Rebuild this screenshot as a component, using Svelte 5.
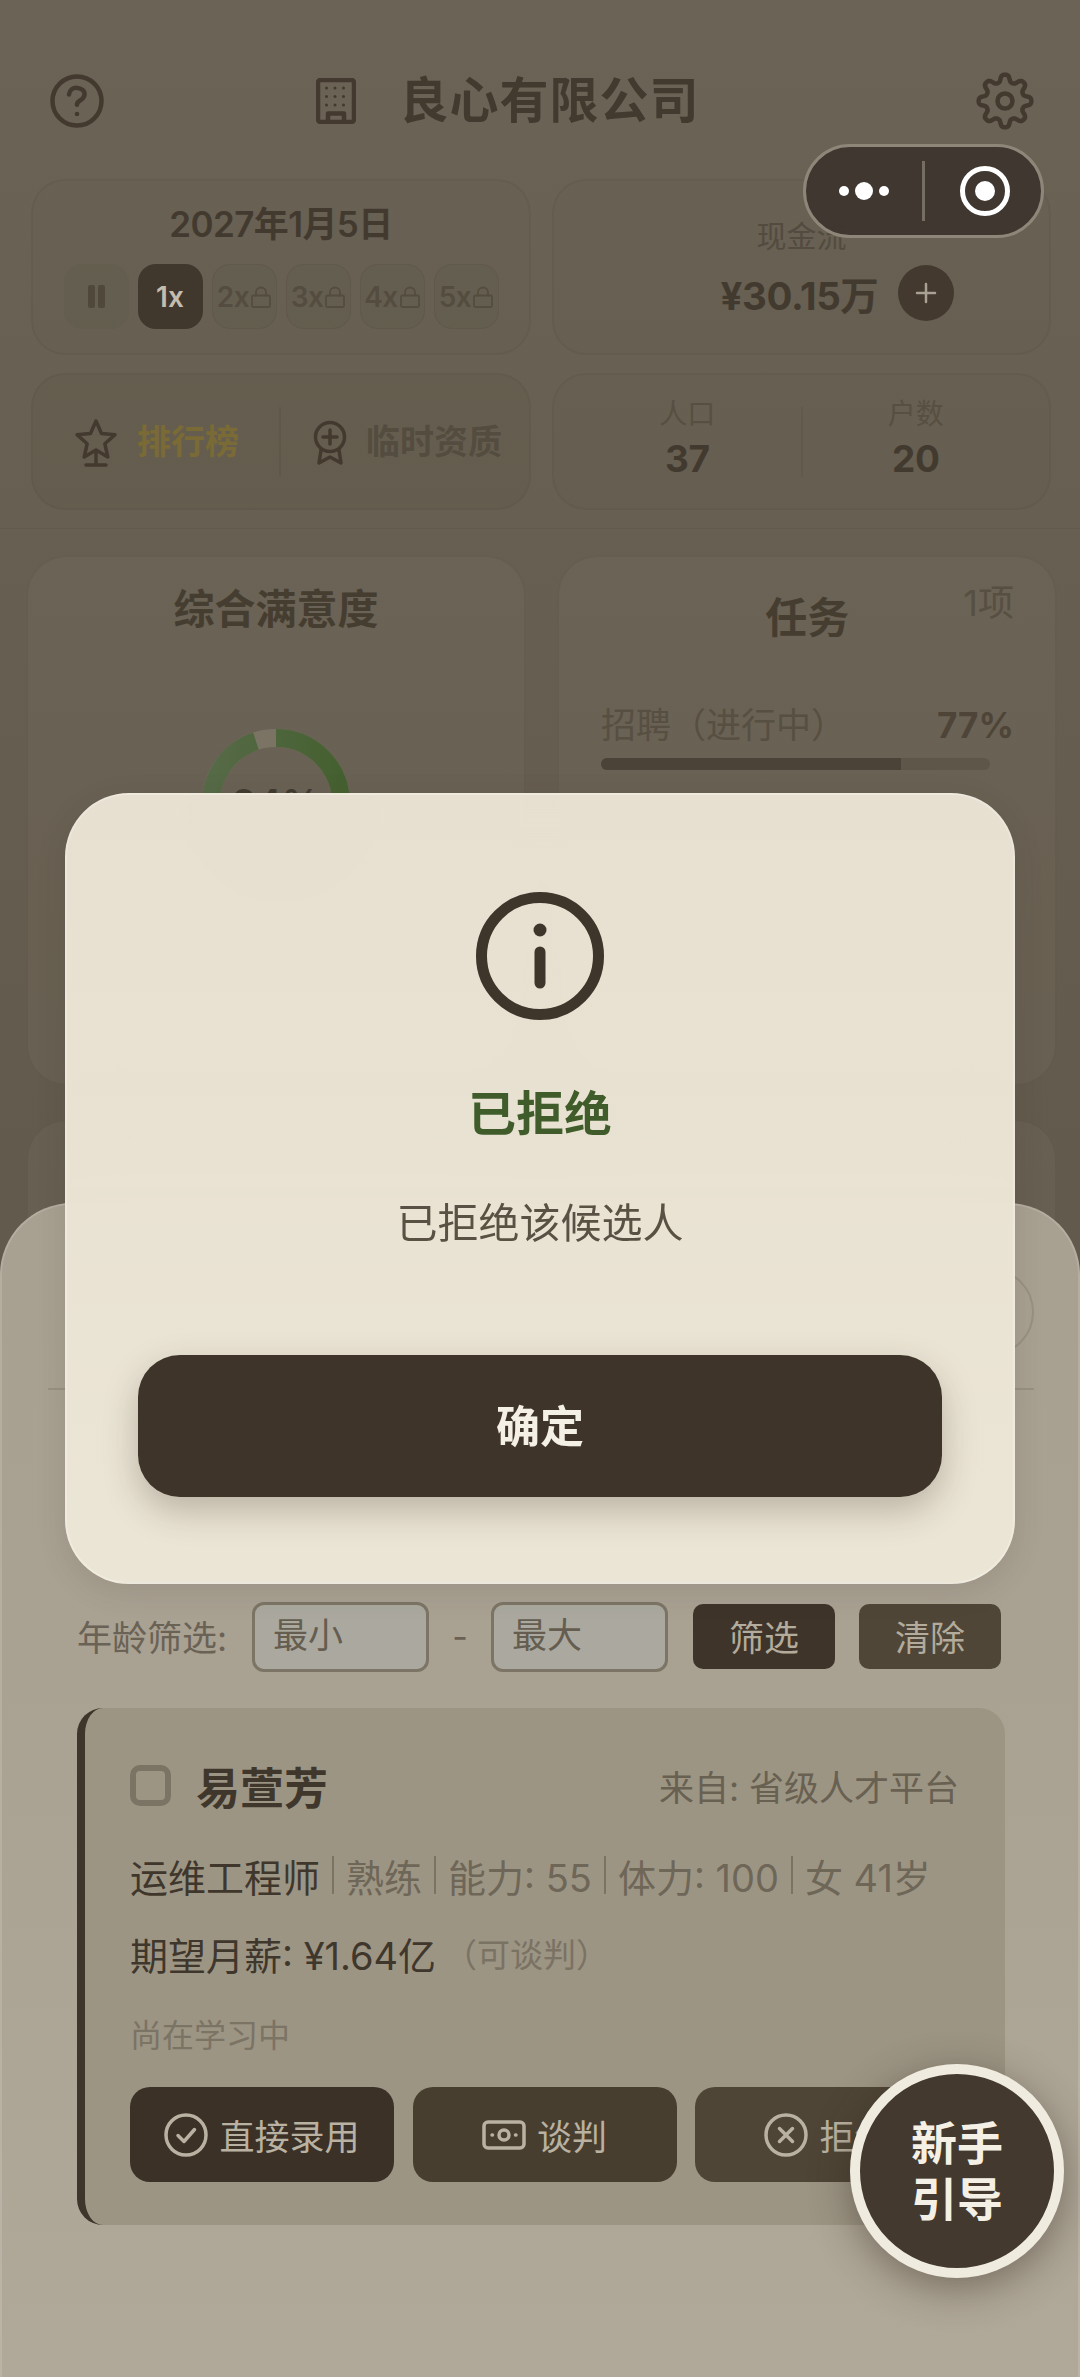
<script>
  const speeds = ['2x', '3x', '4x', '5x']

  // gear outline with eight rounded teeth
  const gearPath = () => {
    const pts = []
    for (let i = 0; i < 240; i++) {
      const a = (i / 240) * Math.PI * 2
      const r = 22.8 + 3.8 * Math.tanh(1.6 * Math.cos(a * 8))
      pts.push(`${(30 + r * Math.sin(a)).toFixed(2)} ${(30 - r * Math.cos(a)).toFixed(2)}`)
    }
    return 'M' + pts.join('L') + 'Z'
  }
  const dots = [0, 1, 2].flatMap((r) => [0, 1, 2].map((c) => [10.5 + c * 8.5, 10 + r * 8.5]))
</script>

<div class="page">
  <header class="top">
    <svg class="help" width="56" height="56" viewBox="0 0 56 56">
      <circle cx="28" cy="28" r="24.5" />
      <path d="M20 21.5c.5-4.5 4-7 8.5-6.6 4.5.4 7.500 3.300 7 7-.4 3.200-2.600 4.500-4.800 5.800-1.700 1-2.700 2-2.700 4" />
      <circle class="fill" cx="28" cy="41" r="2.300" />
    </svg>
    <div class="brand">
      <svg class="plain" width="40" height="46" viewBox="0 0 40 46">
        <rect x="2" y="2" width="36" height="42" rx="2.500" />
        {#each dots as d}
          <circle class="fill" cx={d[0]} cy={d[1]} r="1.500" />
        {/each}
        <path d="M12 44V35.500h16V44" />
      </svg>
      <h1>良心有限公司</h1>
    </div>
    <svg class="gear" width="60" height="60" viewBox="0 0 60 60">
      <path d={gearPath()} />
      <circle cx="30" cy="30" r="7.500" />
    </svg>
  </header>

  <section class="stats">
    <div class="card date-card">
      <div class="date">2027年1月5日</div>
      <div class="speeds">
        <div class="speed pause"><i></i><i></i></div>
        <div class="speed on">1x</div>
        {#each speeds as s}
          <div class="speed locked">
            {s}
            <svg width="20" height="22" viewBox="0 0 20 22">
              <rect x="1" y="9.500" width="18" height="11.500" rx="1.500" />
              <path d="M5 9.500V6.500a5 5 0 0 1 10 0v3" />
            </svg>
          </div>
        {/each}
      </div>
    </div>

    <div class="card cash-card">
      <div class="cash-label">现金流</div>
      <div class="cash-row">
        <b>¥30.15万</b>
        <span class="plus">
          <svg width="24" height="24" viewBox="0 0 24 24"><path d="M12 3v18M3 12h18" /></svg>
        </span>
      </div>
    </div>

    <div class="card links">
      <div class="link">
        <svg class="plain" width="44" height="50" viewBox="0 0 44 50">
          <path d="M22 3l5.500 12.500 13.500 1.300-10.200 8.900 3 13.300L22 32l-11.800 7 3-13.300L3 16.800l13.500-1.300z" />
          <path d="M22 33v13M12 47h20" />
        </svg>
        <span class="gold">排行榜</span>
      </div>
      <div class="vline"></div>
      <div class="link">
        <svg class="plain" width="34" height="46" viewBox="0 0 34 46">
          <circle cx="17" cy="17" r="14.500" />
          <path d="M17 10v14M10 17h14" />
          <path d="M8 30l-2 13 11-6 11 6-2-13" />
        </svg>
        <span>临时资质</span>
      </div>
    </div>

    <div class="card counts">
      <div class="count"><span>人口</span><b>37</b></div>
      <div class="vline"></div>
      <div class="count"><span>户数</span><b>20</b></div>
    </div>
  </section>

  <section class="panels">
    <div class="panel">
      <h2 class="sat-title">综合满意度</h2>
      <div class="donut">
        <svg width="150" height="150" viewBox="0 0 150 150">
          <defs>
            <linearGradient id="ringTone" x1="0" y1="1" x2="0" y2="0">
              <stop offset="0" stop-color="#456030" />
              <stop offset="1" stop-color="#566a47" />
            </linearGradient>
          </defs>
          <circle class="ring-bg" cx="75" cy="75" r="65" />
          <circle class="ring" cx="75" cy="75" r="65" pathLength="100" stroke-dasharray="95 100" transform="rotate(-90 75 75)" />
        </svg>
        <span>94%</span>
      </div>
    </div>
    <div class="panel task-panel">
      <div class="task-count">1项</div>
      <h2 class="task-title">任务</h2>
      <div class="task-row"><span>招聘（进行中）</span><b>77%</b></div>
      <div class="bar"><div class="bar-fill" style="width: 77%"></div></div>
    </div>
    <div class="panel"></div>
    <div class="panel"></div>
  </section>

  <aside class="sheet">
    <div class="sheet-head"><div class="close"></div></div>
    <div class="filter">
      <span class="filter-label">年龄筛选:</span>
      <input placeholder="最小" />
      <span class="dash">-</span>
      <input placeholder="最大" />
      <button class="apply">筛选</button>
      <button class="clear">清除</button>
    </div>

    <article class="candidate">
      <div class="cand-head">
        <div class="check"></div>
        <strong>易萱芳</strong>
        <span class="source">来自: 省级人才平台</span>
      </div>
      <div class="line"><em>运维工程师</em><u></u>熟练<u></u>能力: 55<u></u>体力: 100<u></u>女 41岁</div>
      <div class="line salary"><em>期望月薪: ¥1.64亿</em><small>（可谈判）</small></div>
      <div class="note">尚在学习中</div>
      <div class="actions">
        <button class="act hire">
          <svg width="44" height="44" viewBox="0 0 44 44">
            <circle cx="22" cy="22" r="20" />
            <path d="M14 22.500l6 6 10.500-12" />
          </svg>
          直接录用
        </button>
        <button class="act talk">
          <svg width="44" height="30" viewBox="0 0 44 30">
            <rect x="2" y="2" width="40" height="26" rx="4" />
            <circle cx="22" cy="15" r="5" />
            <path d="M10 15h.5M33.500 15h.5" />
          </svg>
          谈判
        </button>
        <button class="act deny">
          <svg width="44" height="44" viewBox="0 0 44 44">
            <circle cx="22" cy="22" r="20" />
            <path d="M15.500 15.500l13 13M28.500 15.500l-13 13" />
          </svg>
          拒绝
        </button>
      </div>
    </article>
  </aside>

  <div class="overlay">
    <div class="modal">
      <svg class="info" width="128" height="128" viewBox="0 0 128 128">
        <circle cx="64" cy="64" r="58.500" />
        <path d="M64 60v31" />
        <circle class="dot" cx="64" cy="38" r="6.500" />
      </svg>
      <h3>已拒绝</h3>
      <p>已拒绝该候选人</p>
      <button class="ok">确定</button>
    </div>
  </div>

  <div class="capsule">
    <div class="more"><i class="s"></i><i class="l"></i><i class="s"></i></div>
    <div class="cap-line"></div>
    <div class="rec"><i></i></div>
  </div>

  <div class="guide">新手<br />引导</div>
</div>

<style>
  :global(body) {
    margin: 0;
    background: #665e50;
  }

  .page {
    position: relative;
    width: 1080px;
    height: 2377px;
    overflow: hidden;
    background: linear-gradient(180deg, #6b6356 0%, #625a4c 50%);
    color: #433a2f;
    font-family: Inter, "Noto Sans CJK SC", sans-serif;
  }

  svg {
    display: block;
    flex: none;
    fill: none;
    stroke: #43392e;
    stroke-linecap: round;
    stroke-linejoin: round;
  }

  svg .fill {
    fill: #43392e;
    stroke: none;
  }

  .top {
    height: 80px;
    padding: 61px 49px 0;
    display: flex;
    align-items: center;
    justify-content: space-between;
  }

  .help, .plain, .gear {
    stroke-width: 4.5;
  }

  .gear {
    margin-right: -4px;
  }

  .brand {
    display: flex;
    align-items: center;
    gap: 43px;
    margin-right: 64px;
  }

  h1 {
    margin: 0;
    font-size: 49px;
    font-weight: 700;
    letter-spacing: 1px;
    line-height: 80px;
  }

  .stats {
    margin-top: 38px;
    padding: 0 29px 18px 31px;
    display: grid;
    grid-template-columns: 500px 499px;
    grid-template-rows: 176px 137px;
    gap: 18px 21px;
    border-bottom: 1px solid rgba(0, 0, 0, 0.04);
  }

  .card {
    border: 2px solid rgba(60, 50, 40, 0.07);
    border-radius: 34px;
    box-sizing: border-box;
    background: rgba(70, 60, 50, 0.02);
  }

  .date-card {
    display: flex;
    flex-direction: column;
    align-items: center;
  }

  .date {
    margin-top: 18px;
    font-size: 35px;
    font-weight: 600;
    letter-spacing: -0.6px;
    line-height: 50px;
  }

  .speeds {
    margin-top: 15px;
    display: flex;
    gap: 9px;
  }

  .speed {
    width: 65px;
    height: 65px;
    box-sizing: border-box;
    border-radius: 18px;
    display: flex;
    align-items: center;
    justify-content: center;
    font-size: 28px;
    font-weight: 600;
  }

  .pause {
    gap: 3px;
    background: rgba(60, 50, 40, 0.05);
  }

  .pause i {
    width: 7px;
    height: 23px;
    border-radius: 2px;
    background: #50483a;
  }

  .on {
    background: #40372d;
    color: #c4bdae;
  }

  .locked {
    gap: 2px;
    color: #544c3f;
    letter-spacing: -0.5px;
    border: 1px solid rgba(60, 50, 40, 0.1);
    background: rgba(60, 50, 40, 0.05);
  }

  .locked svg {
    stroke: #544c3f;
    stroke-width: 1.800;
  }

  .cash-card {
    display: flex;
    flex-direction: column;
    align-items: center;
  }

  .cash-label {
    margin-top: 34px;
    font-size: 30px;
    line-height: 42px;
    color: #534b3f;
  }

  .cash-row {
    margin-top: 8px;
    padding-left: 72px;
    display: flex;
    align-items: center;
    gap: 20px;
  }

  .cash-row b {
    font-size: 38.500px;
    font-weight: 700;
    letter-spacing: -0.4px;
  }

  .plus {
    width: 56px;
    height: 56px;
    border-radius: 50%;
    background: #43392e;
    display: flex;
    align-items: center;
    justify-content: center;
  }

  .plus svg {
    stroke: #a9a192;
    stroke-width: 2.500;
  }

  .links {
    display: flex;
    align-items: center;
    background: rgba(50, 40, 30, 0.04);
    font-size: 34px;
    font-weight: 700;
    color: #544c3f;
  }

  .link {
    display: flex;
    align-items: center;
    gap: 19px;
    padding-bottom: 4px;
  }

  .links .link:first-child {
    margin-left: 41px;
  }

  .links .link svg {
    margin-top: 6px;
  }

  .links .vline {
    margin: 0 32px 0 40px;
  }

  .links .plain {
    stroke-width: 3.500;
  }

  .gold {
    color: #7a6a36;
  }

  .vline {
    width: 2px;
    height: 70px;
    background: rgba(60, 50, 40, 0.12);
    flex: none;
  }

  .counts {
    display: flex;
    align-items: center;
    padding: 0 20px;
  }

  .count {
    flex: 1;
    display: flex;
    flex-direction: column;
    align-items: center;
    padding-bottom: 6px;
  }

  .count span {
    font-size: 28px;
    line-height: 40px;
    color: #574f42;
  }

  .count b {
    font-size: 37px;
    line-height: 50px;
    font-weight: 700;
    letter-spacing: -0.5px;
  }

  .panels {
    margin-top: 26px;
    padding: 0 23px 0 26px;
    display: grid;
    grid-template-columns: 500px 500px;
    grid-template-rows: 531px 300px;
    gap: 33px 31px;
  }

  .panel {
    border: 2px solid rgba(60, 50, 40, 0.1);
    border-radius: 40px;
    box-sizing: border-box;
    background: rgba(125, 115, 98, 0.22);
  }

  h2 {
    margin: 0;
    text-align: center;
    font-weight: 700;
    color: #463d31;
  }

  .sat-title {
    margin-top: 24px;
    font-size: 41px;
    line-height: 56px;
  }

  .donut {
    position: relative;
    width: 150px;
    margin: 91px auto 0;
  }

  .donut svg {
    stroke-linecap: butt;
    stroke-width: 18;
  }

  .ring-bg {
    stroke: #7b7464;
  }

  .ring {
    stroke: url(#ringTone);
  }

  .donut span {
    position: absolute;
    inset: 0;
    display: flex;
    align-items: center;
    justify-content: center;
    font-size: 38px;
    font-weight: 600;
  }

  .task-panel {
    padding: 0 41px 0 42px;
  }

  .task-count {
    float: right;
    margin-top: 21px;
    font-size: 36px;
    line-height: 50px;
    color: #574f42;
  }

  .task-title {
    margin: 31px 0 0 50px;
    font-size: 42px;
    line-height: 60px;
  }

  .task-row {
    margin-top: 52px;
    display: flex;
    justify-content: space-between;
    align-items: center;
    font-size: 35px;
    line-height: 50px;
    color: #574f42;
  }

  .task-row b {
    font-weight: 700;
    color: #4e4538;
  }

  .bar {
    margin-top: 8px;
    width: 389px;
    height: 12px;
    border-radius: 6px;
    background: #5e5648;
    overflow: hidden;
  }

  .bar-fill {
    height: 100%;
    background: #4b4337;
  }

  .sheet {
    position: absolute;
    left: 0;
    right: 0;
    top: 1203px;
    bottom: 0;
    box-sizing: border-box;
    border: 2px solid rgba(255, 255, 255, 0.14);
    border-bottom: 0;
    border-radius: 72px 72px 0 0;
    background: linear-gradient(180deg, #a8a091 0%, #a9a192 40%, #b0a898 100%);
  }

  .sheet-head {
    margin: 0 44px 0 46px;
    height: 185px;
    border-bottom: 2px solid #98917f;
    box-sizing: border-box;
    display: flex;
    align-items: center;
    justify-content: flex-end;
    padding-top: 30px;
  }

  .close {
    width: 88px;
    height: 88px;
    border: 2px solid #98917f;
    border-radius: 50%;
    box-sizing: border-box;
  }

  .filter {
    margin-top: 211px;
    padding-left: 75px;
    display: flex;
    align-items: center;
    height: 71px;
  }

  .filter-label {
    font-size: 35px;
    color: #6a6255;
    width: 175px;
    white-space: nowrap;
    padding-bottom: 3px;
  }

  input {
    width: 177px;
    height: 70px;
    box-sizing: border-box;
    padding: 0 0 3px 18px;
    border: 3px solid #7c7566;
    border-radius: 12px;
    background: #aba99f;
    font: inherit;
    font-size: 35px;
    color: #645d50;
  }

  input::placeholder {
    color: #645d50;
    opacity: 1;
  }

  .dash {
    width: 62px;
    text-align: center;
    font-size: 34px;
    color: #6a6255;
  }

  .filter button {
    width: 142px;
    height: 65px;
    border: 0;
    padding: 0 0 3px;
    border-radius: 10px;
    font: inherit;
    font-size: 35px;
    color: #b3ab9b;
  }

  .apply {
    margin-left: 25px;
    background: #3e342a;
  }

  .clear {
    margin-left: 24px;
    background: #4f4638;
  }

  .candidate {
    margin: 36px 0 0 75px;
    width: 928px;
    height: 517px;
    box-sizing: border-box;
    padding: 57px 46px 0 45px;
    border-left: 8px solid #3e352b;
    border-radius: 26px;
    background: #9d9584;
  }

  .cand-head {
    display: flex;
    align-items: center;
    height: 41px;
  }

  .check {
    width: 41px;
    height: 41px;
    box-sizing: border-box;
    border: 6px solid #7b7364;
    border-radius: 10px;
  }

  strong {
    margin-left: 25px;
    font-size: 44px;
    font-weight: 700;
    color: #40372c;
  }

  .source {
    margin-left: auto;
    font-size: 35px;
    color: #686051;
  }

  .line {
    margin-top: 41px;
    height: 56px;
    display: flex;
    align-items: center;
    font-size: 38px;
    color: #6e6657;
    white-space: nowrap;
  }

  .line em {
    font-style: normal;
    color: #40372c;
  }

  .line u {
    width: 2px;
    height: 38px;
    margin: 0 12px;
    background: #7b7364;
  }

  .salary {
    margin-top: 22px;
  }

  small {
    margin-left: 8px;
    font-size: 33px;
    color: #7a7263;
  }

  .note {
    margin-top: 32px;
    font-size: 32px;
    line-height: 46px;
    color: #7b7364;
  }

  .actions {
    margin-top: 28px;
    display: grid;
    grid-template-columns: repeat(3, 264px);
    gap: 18.500px;
  }

  .act {
    height: 95px;
    border: 0;
    border-radius: 20px;
    display: flex;
    align-items: center;
    justify-content: center;
    gap: 11px;
    padding: 0;
    font: inherit;
    font-size: 35px;
    color: #b9b1a1;
  }

  .act svg {
    stroke: #b9b1a1;
    stroke-width: 3.500;
  }

  .hire {
    background: #3b3127;
  }

  .talk {
    background: #483e2f;
  }

  .deny {
    background: #4e4536;
  }

  .overlay {
    position: absolute;
    inset: 0;
    display: flex;
    align-items: center;
    justify-content: center;
  }

  .modal {
    width: 950px;
    height: 791px;
    box-sizing: border-box;
    padding: 97px 71px 0;
    display: flex;
    flex-direction: column;
    align-items: center;
    border-radius: 64px;
    border: 2px solid rgba(255, 255, 255, 0.22);
    background: linear-gradient(180deg, rgba(233, 226, 211, 0.985), rgba(236, 230, 214, 0.99));
    backdrop-filter: blur(24px);
    box-shadow: 0 8px 30px rgba(60, 50, 40, 0.12);
  }

  .info {
    stroke: #3e352b;
    stroke-width: 11;
  }

  .dot {
    fill: #3e352b;
    stroke: none;
  }

  h3 {
    margin: 63px 0 0;
    font-size: 48px;
    line-height: 62px;
    font-weight: 700;
    color: #3f5c2a;
  }

  p {
    margin: 49px 0 0;
    font-size: 41px;
    line-height: 58px;
    color: #5a5145;
  }

  .ok {
    margin-top: 103px;
    width: 100%;
    height: 142px;
    flex: none;
    border: 0;
    padding: 0 0 4px;
    border-radius: 42px;
    background: #3e342a;
    box-shadow: 0 14px 34px rgba(60, 50, 40, 0.28);
    color: #f5f0e6;
    font: inherit;
    font-size: 44px;
    font-weight: 700;
  }

  .capsule {
    position: absolute;
    left: 803px;
    top: 144px;
    width: 241px;
    height: 94px;
    box-sizing: border-box;
    border: 3px solid #8e8779;
    border-radius: 47px;
    background: rgba(62, 54, 47, 0.97);
    display: flex;
    align-items: center;
  }

  .more {
    width: 116px;
    display: flex;
    align-items: center;
    justify-content: center;
    gap: 6px;
  }

  .more i {
    border-radius: 50%;
    background: #fff;
  }

  .more .s {
    width: 10px;
    height: 10px;
  }

  .more .l {
    width: 18px;
    height: 18px;
  }

  .cap-line {
    width: 3px;
    height: 60px;
    background: #756e62;
  }

  .rec {
    width: 50px;
    height: 50px;
    box-sizing: border-box;
    margin-left: 35px;
    border: 5px solid #fff;
    border-radius: 50%;
    display: flex;
    align-items: center;
    justify-content: center;
  }

  .rec i {
    width: 20px;
    height: 20px;
    border-radius: 50%;
    background: #fff;
  }

  .guide {
    position: absolute;
    left: 850px;
    top: 2064px;
    width: 214px;
    height: 214px;
    box-sizing: border-box;
    border: 10px solid #f0ebdf;
    border-radius: 50%;
    background: #43392e;
    box-shadow: 0 10px 40px rgba(50, 40, 30, 0.45);
    display: flex;
    align-items: center;
    justify-content: center;
    text-align: center;
    font-size: 46px;
    line-height: 56px;
    font-weight: 700;
    color: #f5f0e6;
  }
</style>
